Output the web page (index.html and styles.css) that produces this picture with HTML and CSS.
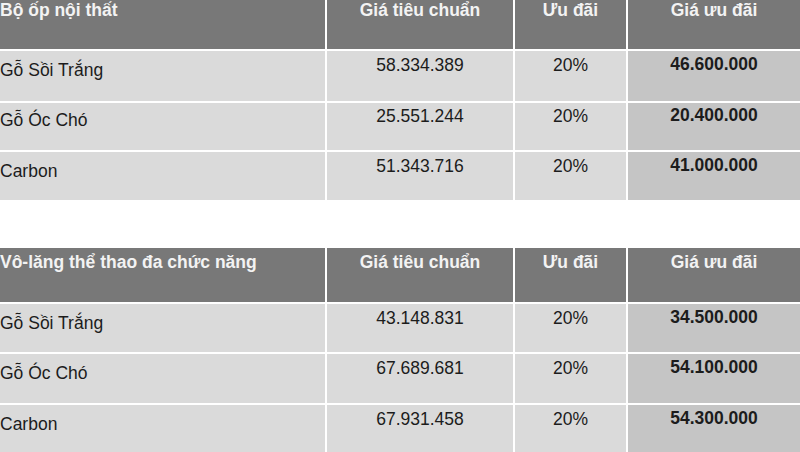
FILE: index.html
```html
<!DOCTYPE html>
<html lang="vi">
<head>
<meta charset="utf-8">
<title>Bảng giá</title>
<link rel="stylesheet" href="styles.css">
</head>
<body>
<div class="page">
  <div class="price-table first">
    <div class="cell head name">Bộ ốp nội thất</div>
    <div class="cell head">Giá tiêu chuẩn</div>
    <div class="cell head">Ưu đãi</div>
    <div class="cell head">Giá ưu đãi</div>

    <div class="cell name r1">Gỗ Sồi Trắng</div>
    <div class="cell r1">58.334.389</div>
    <div class="cell r1">20%</div>
    <div class="cell deal r1">46.600.000</div>

    <div class="cell name r2">Gỗ Óc Chó</div>
    <div class="cell r2">25.551.244</div>
    <div class="cell r2">20%</div>
    <div class="cell deal r2">20.400.000</div>

    <div class="cell name r3">Carbon</div>
    <div class="cell r3">51.343.716</div>
    <div class="cell r3">20%</div>
    <div class="cell deal r3">41.000.000</div>
  </div>

  <div class="price-table second">
    <div class="cell head name">Vô-lăng thể thao đa chức năng</div>
    <div class="cell head">Giá tiêu chuẩn</div>
    <div class="cell head">Ưu đãi</div>
    <div class="cell head">Giá ưu đãi</div>

    <div class="cell name">Gỗ Sồi Trắng</div>
    <div class="cell">43.148.831</div>
    <div class="cell">20%</div>
    <div class="cell deal">34.500.000</div>

    <div class="cell name">Gỗ Óc Chó</div>
    <div class="cell">67.689.681</div>
    <div class="cell">20%</div>
    <div class="cell deal">54.100.000</div>

    <div class="cell name">Carbon</div>
    <div class="cell">67.931.458</div>
    <div class="cell">20%</div>
    <div class="cell deal">54.300.000</div>
  </div>
</div>
</body>
</html>
```

FILE: styles.css
```css
html, body {
  margin: 0;
  padding: 0;
  background: #ffffff;
}

body {
  font-family: "Liberation Sans", Arial, sans-serif;
  font-size: 17.5px;
  line-height: 20px;
  color: #1c1c1c;
  width: 800px;
  height: 452px;
  overflow: hidden;
}

.page {
  display: flex;
  flex-direction: column;
  gap: 48px;
}

.price-table {
  display: grid;
  grid-template-columns: 325px 186px 111px 172px;
  gap: 2px;
  background: #ffffff;
}

.first {
  grid-template-rows: 49px 50px 47px 48px;
}

.second {
  grid-template-rows: 54px 48px 49px 48px;
}

.cell {
  background: #dadada;
  text-align: center;
  padding-top: 4px;
  box-sizing: border-box;
}

.cell.name {
  text-align: left;
  padding-left: 0;
  padding-top: 9px;
}

.cell.deal {
  background: #c5c5c5;
  font-weight: bold;
  padding-top: 3px;
}

.cell.head {
  background: #787878;
  color: #f3f3f3;
  font-weight: bold;
  padding-top: 4px;
}

.first .cell.head {
  padding-top: 0;
}

.first .cell.name.r2 {
  padding-top: 7px;
}

.first .cell.r2 {
  padding-top: 3px;
}

.first .cell.deal.r2 {
  padding-top: 2px;
}
```
